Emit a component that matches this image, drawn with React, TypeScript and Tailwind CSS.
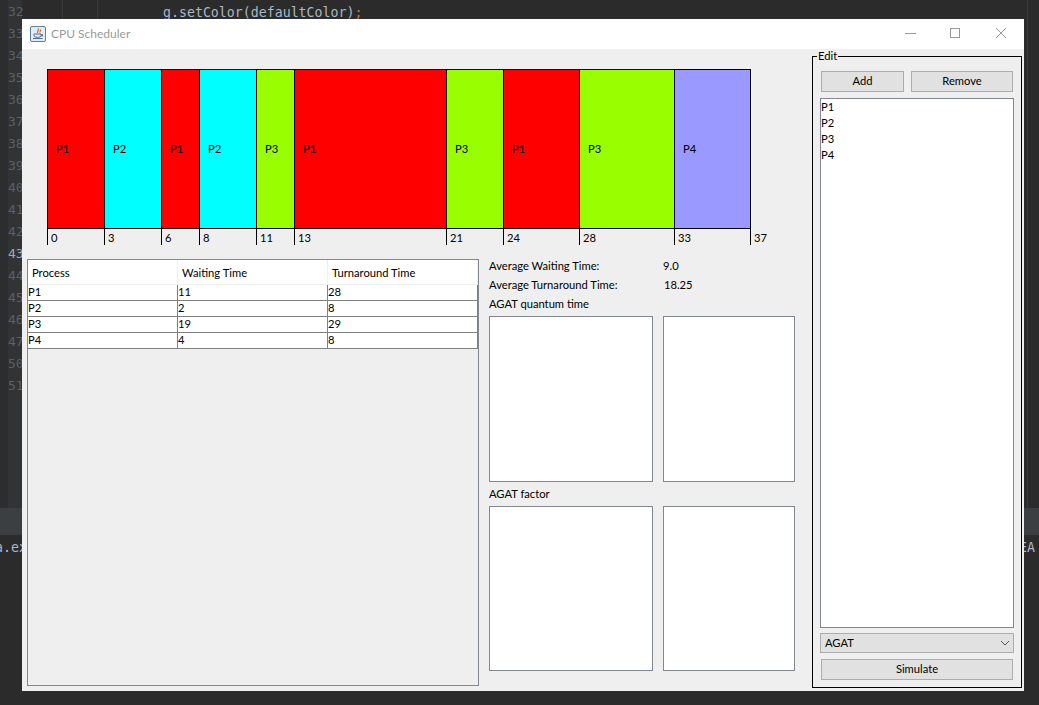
const segs = [
  { w: 57, c: "bg-[#ff0000]", l: "P1", t: "0" },
  { w: 57, c: "bg-[#00ffff]", l: "P2", t: "3" },
  { w: 38, c: "bg-[#ff0000]", l: "P1", t: "6" },
  { w: 57, c: "bg-[#00ffff]", l: "P2", t: "8" },
  { w: 38, c: "bg-[#99ff00]", l: "P3", t: "11" },
  { w: 152, c: "bg-[#ff0000]", l: "P1", t: "13" },
  { w: 57, c: "bg-[#99ff00]", l: "P3", t: "21" },
  { w: 76, c: "bg-[#ff0000]", l: "P1", t: "24" },
  { w: 95, c: "bg-[#99ff00]", l: "P3", t: "28" },
  { w: 76, c: "bg-[#9999ff]", l: "P4", t: "33" },
];
const rows = [
  ["P1", "11", "28"],
  ["P2", "2", "8"],
  ["P3", "19", "29"],
  ["P4", "4", "8"],
];
const lineNos = ["32", "33", "34", "35", "36", "37", "38", "39", "40", "41", "42", "43", "44", "45", "46", "47", "50", "51"];

function Box({ w, h }: { w: string; h: string }) {
  return <div className={`bg-white border border-[#828790] ${w} ${h}`} />;
}

export default function App() {
  return (
    <div className="relative w-[1039px] h-[705px] overflow-hidden bg-[#2b2b2b] font-['Lato',sans-serif] text-[11.2px] text-black">
      <div className="absolute left-0 top-0 w-[22px] h-[508px] bg-[#313335]" />
      <div className="absolute left-0 top-0 w-[8px] h-[508px] bg-[#2b2d2f]" />
      <div className="absolute left-[62px] top-0 w-px h-[19px] bg-[#3a3a3a]" />
      <div className="absolute left-[97px] top-0 w-px h-[19px] bg-[#3a3a3a]" />
      <div className="absolute left-[1027px] top-0 w-px h-[508px] bg-[#3a3a3a]" />
      <div className="absolute left-0 top-[1px] flex flex-col font-['DejaVu_Sans_Mono',monospace] text-[13px] text-[#5c6063] pl-[8px] leading-[22px]">
        {lineNos.map((n) => (
          <span key={n} className={n === "43" ? "text-[#a4a7aa]" : ""}>{n}</span>
        ))}
      </div>
      <div className="absolute left-[163px] top-[3px] font-['DejaVu_Sans_Mono',monospace] text-[13.25px] leading-[19px] text-[#a9b7c6]">
        g.setColor(defaultColor)<span className="text-[#cc7832]">;</span>
      </div>
      <div className="absolute left-0 top-[508px] w-full h-[27px] bg-[#3c3f41]" />
      <div className="absolute -left-[5px] top-[538px] font-['DejaVu_Sans_Mono',monospace] text-[13.25px] text-[#a9b7c6]">a.ex</div>
      <div className="absolute left-[1019px] top-[538px] font-['DejaVu_Sans_Mono',monospace] text-[13.25px] text-[#a9b7c6]">EA</div>

      <div className="absolute left-[22px] top-[19px] w-[1002px] h-[672px] flex flex-col bg-[#efefef]">
        <div className="h-[30px] bg-white flex items-center shrink-0">
          <svg className="ml-[8px]" width="16" height="16" viewBox="0 0 16 16">
            <rect x="0.5" y="0.5" width="15" height="15" rx="1.5" fill="#e3ebf3" stroke="#5f7f9f" />
            <path d="M8 2.500c2 1.500-1.800 2.500-.3 4.500M10.200 3.500c1.200 1-1 2 0 3" stroke="#d9662a" strokeWidth="1.2" fill="none" />
            <path d="M4 8h7v1.500c0 1.300-1.400 1.800-3.500 1.800S4 10.800 4 9.500zM11 8.500h1.500v1.500H11M3 12.500h9.500" stroke="#4d6f92" strokeWidth="1" fill="none" />
          </svg>
          <span className="ml-[5px] text-[12px] text-[#9a9a9a]">CPU Scheduler</span>
          <div className="ml-auto flex items-center">
            <svg width="46" height="30" viewBox="0 0 46 30"><path d="M19 14.500h11" stroke="#999" fill="none" /></svg>
            <svg width="46" height="30" viewBox="0 0 46 30"><rect x="18.500" y="9.500" width="9" height="9" stroke="#999" fill="none" /></svg>
            <svg width="46" height="30" viewBox="0 0 46 30"><path d="M18 9l10 10M28 9L18 19" stroke="#999" fill="none" /></svg>
          </div>
        </div>

        <div className="flex-1 flex min-h-0">
          <div className="w-[790px] shrink-0 flex flex-col">
            <div className="ml-[25px] mt-[20px] flex h-[176px]">
              {segs.map((s, i) => (
                <div key={i} className="flex flex-col shrink-0" style={{ width: s.w }}>
                  <div className={`${s.c} h-[162px] border-l border-y border-black flex items-center pl-[8px]`}>{s.l}</div>
                  <div className="flex-1 border-l border-black pl-[3px] pt-[1px] leading-[15px]">{s.t}</div>
                </div>
              ))}
              <div className="flex flex-col shrink-0 w-[20px]">
                <div className="h-[162px] border-l border-black" />
                <div className="flex-1 border-l border-black pl-[3px] pt-[1px] leading-[15px]">37</div>
              </div>
            </div>

            <div className="flex mt-[14px] ml-[5px]">
              <div className="w-[452px] h-[427px] border border-[#828790] flex flex-col">
                <div className="flex bg-white h-[25px] border-b border-[#efefef]">
                  {["Process", "Waiting Time", "Turnaround Time"].map((h) => (
                    <div key={h} className="w-[150px] border-r border-[#efefef] pl-[4px] pt-[2px] flex items-center">{h}</div>
                  ))}
                </div>
                {rows.map((r) => (
                  <div key={r[0]} className="flex bg-white h-[16px] border-b border-[#808080]">
                    {r.map((c, i) => (
                      <div key={i} className="w-[150px] border-r border-[#808080] leading-[14px]">{c}</div>
                    ))}
                  </div>
                ))}
              </div>

              <div className="ml-[10px] flex flex-col w-[306px]">
                <div className="h-[16px] flex leading-[14px]">
                  <span className="w-[174px]">Average Waiting Time:</span>
                  <span>9.0</span>
                </div>
                <div className="h-[19px] mt-[1px] flex items-center">
                  <span className="w-[175px]">Average Turnaround Time:</span>
                  <span>18.25</span>
                </div>
                <div className="h-[19px] flex items-center">AGAT quantum time</div>
                <div className="flex gap-[10px] mt-[2px]">
                  <Box w="w-[164px]" h="h-[166px]" />
                  <Box w="w-[132px]" h="h-[166px]" />
                </div>
                <div className="h-[24px] flex items-center">AGAT factor</div>
                <div className="flex gap-[10px]">
                  <Box w="w-[164px]" h="h-[165px]" />
                  <Box w="w-[132px]" h="h-[165px]" />
                </div>
              </div>
            </div>
          </div>

          <div className="relative mt-[7px] ml-0 w-[210px] h-[632px] border border-black flex flex-col px-[7px]">
            <span className="absolute left-[4px] -top-[8px] px-[1px] bg-[#efefef] leading-[14px]">Edit</span>
            <div className="flex mt-[14px] gap-[7px] px-[1px]">
              <button className="w-[83px] h-[21px] bg-[#e1e1e1] border border-[#adadad]">Add</button>
              <button className="w-[102px] h-[21px] bg-[#e1e1e1] border border-[#adadad]">Remove</button>
            </div>
            <div className="mt-[6px] h-[530px] bg-white border border-[#828790] flex flex-col leading-[16px]">
              <span>P1</span><span>P2</span><span>P3</span><span>P4</span>
            </div>
            <div className="mt-[5px] h-[20px] bg-[#e1e1e1] border border-[#adadad] flex items-center pl-[4px] pr-[3px]">
              <span>AGAT</span>
              <svg className="ml-auto" width="10" height="6" viewBox="0 0 10 6"><path d="M1 1l4 4 4-4" stroke="#555" fill="none" /></svg>
            </div>
            <button className="mt-[6px] mx-[1px] h-[21px] bg-[#e1e1e1] border border-[#adadad]">Simulate</button>
          </div>
        </div>
      </div>
    </div>
  );
}
